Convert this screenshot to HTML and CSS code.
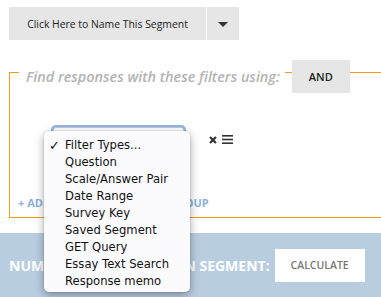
FILE: index.html
```html
<!DOCTYPE html>
<html>
<head>
<meta charset="utf-8">
<link rel="stylesheet" href="styles.css">
</head>
<body>
<div class="page">
  <div class="name-btn">
    <div class="name-main">Click Here to Name This Segment</div>
    <div class="name-caret"><span class="caret"></span></div>
  </div>

  <div class="filters">
    <div class="head">
      <span class="legend-text">Find responses with these filters using:</span>
      <span class="and-btn">AND</span>
    </div>
    <div class="filter-row">
      <div class="select-wrap">
        <div class="select"></div>
        <ul class="menu">
          <li class="checked">Filter Types...</li>
          <li>Question</li>
          <li>Scale/Answer Pair</li>
          <li>Date Range</li>
          <li>Survey Key</li>
          <li>Saved Segment</li>
          <li>GET Query</li>
          <li>Essay Text Search</li>
          <li>Response memo</li>
        </ul>
      </div>
      <div class="row-icons">
        <svg class="icon-x" width="8" height="8" viewBox="0 0 8 8"><path d="M1 1 L7 7 M7 1 L1 7" stroke="#333" stroke-width="2.2"/></svg>
        <svg class="icon-menu" width="11" height="9" viewBox="0 0 11 9"><rect x="0" y="0" width="11" height="1.6" fill="#333"/><rect x="0" y="3.7" width="11" height="1.6" fill="#333"/><rect x="0" y="7.4" width="11" height="1.6" fill="#333"/></svg>
      </div>
    </div>
    <div class="add-row">
      <span class="add-link">+ ADD FILTER</span>
      <span class="add-link">+ ADD GROUP</span>
    </div>
  </div>
</div>

<div class="count-bar">
  <span class="count-label">NUMBER OF RESPONSES IN SEGMENT:</span>
  <span class="calc-btn">CALCULATE</span>
</div>
</body>
</html>
```

FILE: styles.css
```css
html, body {
  margin: 0;
  padding: 0;
  background: #fff;
  font-family: "Open Sans", "Noto Sans", sans-serif;
  overflow: hidden;
  width: 381px;
  height: 297px;
}

.page {
  padding: 7px 0 0 9px;
}

.name-btn {
  display: flex;
  height: 33px;
  width: 230px;
}

.name-main {
  width: 197px;
  background: #e6e6e6;
  display: flex;
  align-items: center;
  justify-content: center;
  font-size: 10.4px;
  color: #222;
  margin-right: 1px;
}

.name-caret {
  width: 32px;
  background: #e6e6e6;
  display: flex;
  align-items: center;
  justify-content: center;
}

.caret {
  width: 0;
  height: 0;
  border-left: 5px solid transparent;
  border-right: 5px solid transparent;
  border-top: 5px solid #333;
  margin-top: 2px;
}

.filters {
  margin-top: 32px;
  border: 1px solid #f5981f;
  border-right: none;
  height: 144px;
}

.head {
  display: flex;
  align-items: center;
  margin-top: -13px;
  margin-left: 9px;
  height: 33px;
}

.legend-text {
  background: #fff;
  padding: 0 5px 0 7px;
  font-style: italic;
  font-weight: 600;
  font-size: 14.4px;
  color: #b3b3b3;
  line-height: 20px;
}

.and-btn {
  margin-left: 7px;
  width: 58px;
  height: 33px;
  background: #e6e6e6;
  display: flex;
  align-items: center;
  justify-content: center;
  font-size: 11px;
  font-weight: 600;
  color: #222;
}

.filter-row {
  display: flex;
  align-items: flex-start;
  margin-top: 34px;
  padding-left: 43px;
}

.select-wrap {
  position: relative;
  width: 131px;
  height: 36px;
}

.select {
  width: 129px;
  height: 34px;
  border: 1px solid #c9c9c9;
  border-radius: 3px;
  box-shadow: 0 0 0 2px #8fb5e3;
  background: #fff;
}

.menu {
  position: absolute;
  left: -9px;
  top: 4px;
  width: 146px;
  height: 161px;
  box-sizing: border-box;
  margin: 0;
  padding: 6px 0 0 0;
  list-style: none;
  background: #fbfbfd;
  border-radius: 5px;
  box-shadow: 0 3px 10px rgba(0, 0, 0, 0.35), 0 0 0 1px rgba(0, 0, 0, 0.06);
  font-family: "DejaVu Sans", sans-serif;
  font-size: 11.6px;
  color: #111;
  z-index: 5;
}

.menu li {
  height: 17px;
  line-height: 17px;
  padding-left: 21px;
  position: relative;
  white-space: nowrap;
}

.menu li.checked::before {
  content: "✓";
  position: absolute;
  left: 5px;
  top: 0;
  font-size: 13px;
  font-weight: 700;
}

.row-icons {
  display: flex;
  align-items: center;
  gap: 5px;
  margin-left: 25px;
  margin-top: 8px;
}

.add-row {
  display: flex;
  gap: 44px;
  margin-top: 32px;
  padding-left: 8px;
}

.add-link {
  font-size: 11px;
  font-weight: 700;
  color: #8db1dd;
  line-height: 16px;
}

.count-bar {
  margin-top: 15px;
  height: 64px;
  background: #b9cde1;
  display: flex;
  align-items: center;
  padding-left: 9px;
}

.count-label {
  color: #fff;
  font-weight: 700;
  font-size: 14px;
}

.calc-btn {
  margin-left: 5px;
  width: 90px;
  height: 33px;
  background: #fff;
  display: flex;
  align-items: center;
  justify-content: center;
  font-size: 10.5px;
  font-weight: 600;
  color: #777;
}
```
